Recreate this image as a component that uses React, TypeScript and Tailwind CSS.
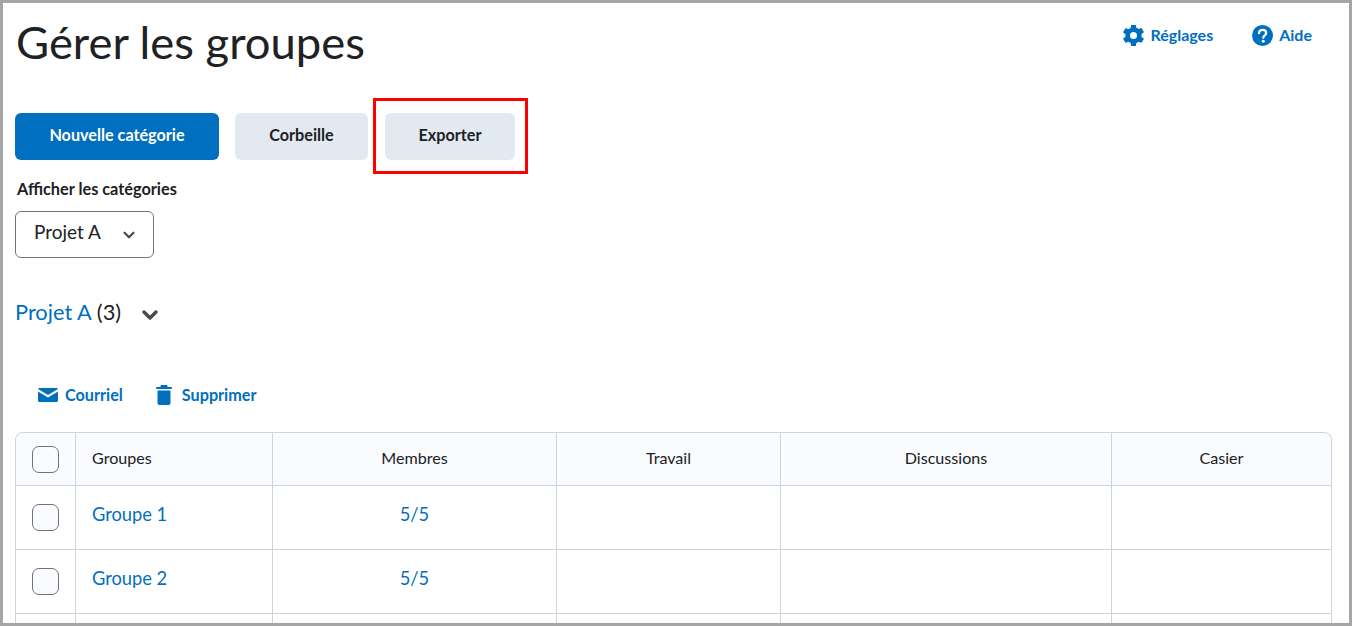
import { ChevronDown } from 'lucide-react';

const font = { fontFamily: 'Lato, sans-serif' };

function GearIcon() {
  return (
    <svg viewBox="0 0 24 24" className="w-[21px] h-[21px] fill-[#006fbf]">
      <path d="M21.2 13.6c.1-.5.1-1 .1-1.6s0-1.100-.1-1.600l2.300-1.800c.3-.2.300-.5.200-.8l-2.300-4c-.2-.3-.5-.4-.8-.3l-2.700 1.100c-.8-.6-1.700-1.100-2.700-1.500L14.800.3c0-.2-.3-.3-.6-.3H9.800c-.3 0-.6.100-.6.400l-.4 2.900c-1 .4-1.900.9-2.700 1.500L3.400 3.700c-.3-.1-.6 0-.8.300l-2.300 4c-.1.300-.1.600.2.800l2.300 1.800c-.1.500-.1 1-.1 1.600s0 1.100.1 1.600L.5 15.200c-.3.200-.3.500-.2.800l2.300 4c.2.300.5.400.8.300l2.700-1.100c.8.600 1.700 1.100 2.700 1.500l.4 2.900c0 .2.300.4.600.4h4.400c.3 0 .6-.2.600-.4l.4-2.900c1-.4 1.900-.9 2.700-1.500l2.700 1.100c.3.100.6 0 .8-.3l2.300-4c.1-.3.100-.6-.2-.8zM12 16a4 4 0 1 1 0-8 4 4 0 0 1 0 8z" />
    </svg>
  );
}

function HelpIcon() {
  return (
    <svg viewBox="0 0 24 24" className="w-[21px] h-[21px]">
      <circle cx="12" cy="12" r="12" fill="#006fbf" />
      <path d="M8 9.300C8 6.900 9.800 5.500 12.100 5.500c2.300 0 4 1.400 4 3.500 0 1.500-.8 2.300-1.900 3.100-.9.600-1.200 1-1.200 2v.4" fill="none" stroke="#fff" strokeWidth="2.600" strokeLinecap="round" />
      <circle cx="12.900" cy="18.600" r="1.700" fill="#fff" />
    </svg>
  );
}

function MailIcon() {
  return (
    <svg viewBox="0 0 20 14" className="w-[20px] h-[14px] fill-[#006fbf]">
      <path d="M1.500 0h17c.7 0 1.300.4 1.500 1l-10 6L0 1c.2-.6.800-1 1.500-1z" />
      <path d="M0 3.400l10 6 10-6v9.100c0 .8-.7 1.500-1.500 1.500h-17C.7 14 0 13.300 0 12.500z" />
    </svg>
  );
}

function TrashIcon() {
  return (
    <svg viewBox="0 0 16 20" className="w-[16px] h-[20px] fill-[#006fbf]">
      <path d="M5.500 0h5c.5 0 1 .4 1 1v1h3.500c.6 0 1 .4 1 1s-.4 1-1 1H1C.4 4 0 3.600 0 3s.4-1 1-1h3.500V1c0-.6.500-1 1-1z" />
      <path d="M1.500 5.500h13V18c0 1.100-.9 2-2 2h-9c-1.100 0-2-.9-2-2z" />
    </svg>
  );
}

function Checkbox({ tinted }: { tinted?: boolean }) {
  return (
    <div className={`w-[27px] h-[27px] rounded-[7px] border border-[#6e7477] ${tinted ? 'bg-[#f9fbff]' : 'bg-transparent'}`} />
  );
}

const columns = 'grid grid-cols-[60px_197px_284px_224px_331px_1fr]';

function Row({ name, members }: { name?: string; members?: string }) {
  return (
    <div className={`${columns} h-[64px] border-b border-[#cdd5dc]`}>
      <div className="flex items-center justify-center border-r border-[#cdd5dc]">
        {name && <Checkbox tinted />}
      </div>
      <div className="flex items-center pl-4 pb-[5px] border-r border-[#cdd5dc] text-[18.3px] text-[#006fbf]">{name}</div>
      <div className="flex items-center justify-center pb-[5px] border-r border-[#cdd5dc] text-[18.3px] text-[#006fbf]">{members}</div>
      <div className="border-r border-[#cdd5dc]" />
      <div className="border-r border-[#cdd5dc]" />
      <div />
    </div>
  );
}

export default function App() {
  return (
    <div style={font} className="relative w-[1352px] h-[626px] overflow-hidden bg-white border-[3px] border-[#a6a6a6] text-[#202122]">
      <div className="flex justify-between items-start pl-[13px] pr-[37px] pt-[10px]">
        <h1 className="text-[45.400px] leading-[58px] font-normal">Gérer les groupes</h1>
        <div className="flex items-center gap-[39px] pt-[10px] text-[16px] font-bold text-[#006fbf]">
          <div className="flex items-center gap-[6px]">
            <GearIcon />
            Réglages
          </div>
          <div className="flex items-center gap-[6px]">
            <HelpIcon />
            Aide
          </div>
        </div>
      </div>

      <div className="flex gap-4 pl-[12px] mt-[42px]">
        <button className="w-[204px] h-[47px] pb-[2px] rounded-[6px] bg-[#006fbf] text-white text-[16.200px] font-bold">Nouvelle catégorie</button>
        <button className="w-[133px] h-[47px] pb-[2px] rounded-[6px] bg-[#e3e9f1] text-[16.200px] font-bold">Corbeille</button>
        <button className="ml-[1px] w-[130px] h-[47px] pb-[2px] rounded-[6px] bg-[#e3e9f1] text-[16.200px] font-bold">Exporter</button>
      </div>

      <div className="pl-[14px] mt-[19px] text-[16.300px] leading-[20px] font-bold">Afficher les catégories</div>

      <div className="ml-[12px] mt-[12px] w-[139px] h-[47px] flex items-center justify-between pl-[18px] pr-[15px] pb-[4px] rounded-[6px] border border-[#6e7477] text-[19px]">
        Projet A
        <ChevronDown className="mt-[4px] w-[18px] h-[18px] text-[#494c4e]" strokeWidth={3} />
      </div>

      <div className="flex items-center pl-[12px] mt-[40px] h-[30px] pb-[2px] text-[21.800px]">
        <span className="text-[#006fbf]">Projet A</span>
        <span className="ml-[5px]">(3)</span>
        <ChevronDown className="ml-[17px] mt-[5px] w-[24px] h-[24px] text-[#494c4e]" strokeWidth={3.5} />
      </div>

      <div className="flex items-center pl-[35px] mt-[53px] h-[28px] text-[16.200px] font-bold text-[#006fbf]">
        <MailIcon />
        <span className="ml-[7px]">Courriel</span>
        <span className="ml-[33px]"><TrashIcon /></span>
        <span className="ml-[10px]">Supprimer</span>
      </div>

      <div className="ml-[12px] mt-[23px] w-[1317px] rounded-t-[8px] border-t border-x border-[#cdd5dc] overflow-hidden">
        <div className={`${columns} h-[53px] bg-[#f9fbff] border-b border-[#cdd5dc] text-[16.100px]`}>
          <div className="flex items-center justify-center border-r border-[#cdd5dc]">
            <Checkbox />
          </div>
          <div className="flex items-center pl-4 pb-[2px] border-r border-[#cdd5dc]">Groupes</div>
          <div className="flex items-center justify-center pb-[2px] border-r border-[#cdd5dc]">Membres</div>
          <div className="flex items-center justify-center pb-[2px] border-r border-[#cdd5dc]">Travail</div>
          <div className="flex items-center justify-center pb-[2px] border-r border-[#cdd5dc]">Discussions</div>
          <div className="flex items-center justify-center pb-[2px]">Casier</div>
        </div>
        <Row name="Groupe 1" members="5/5" />
        <Row name="Groupe 2" members="5/5" />
        <Row />
      </div>

      {/* annotation box round Exporter */}
      <div className="absolute left-[370px] top-[95px] w-[155px] h-[76px] border-[3px] border-[#ff0000]" />
    </div>
  );
}
